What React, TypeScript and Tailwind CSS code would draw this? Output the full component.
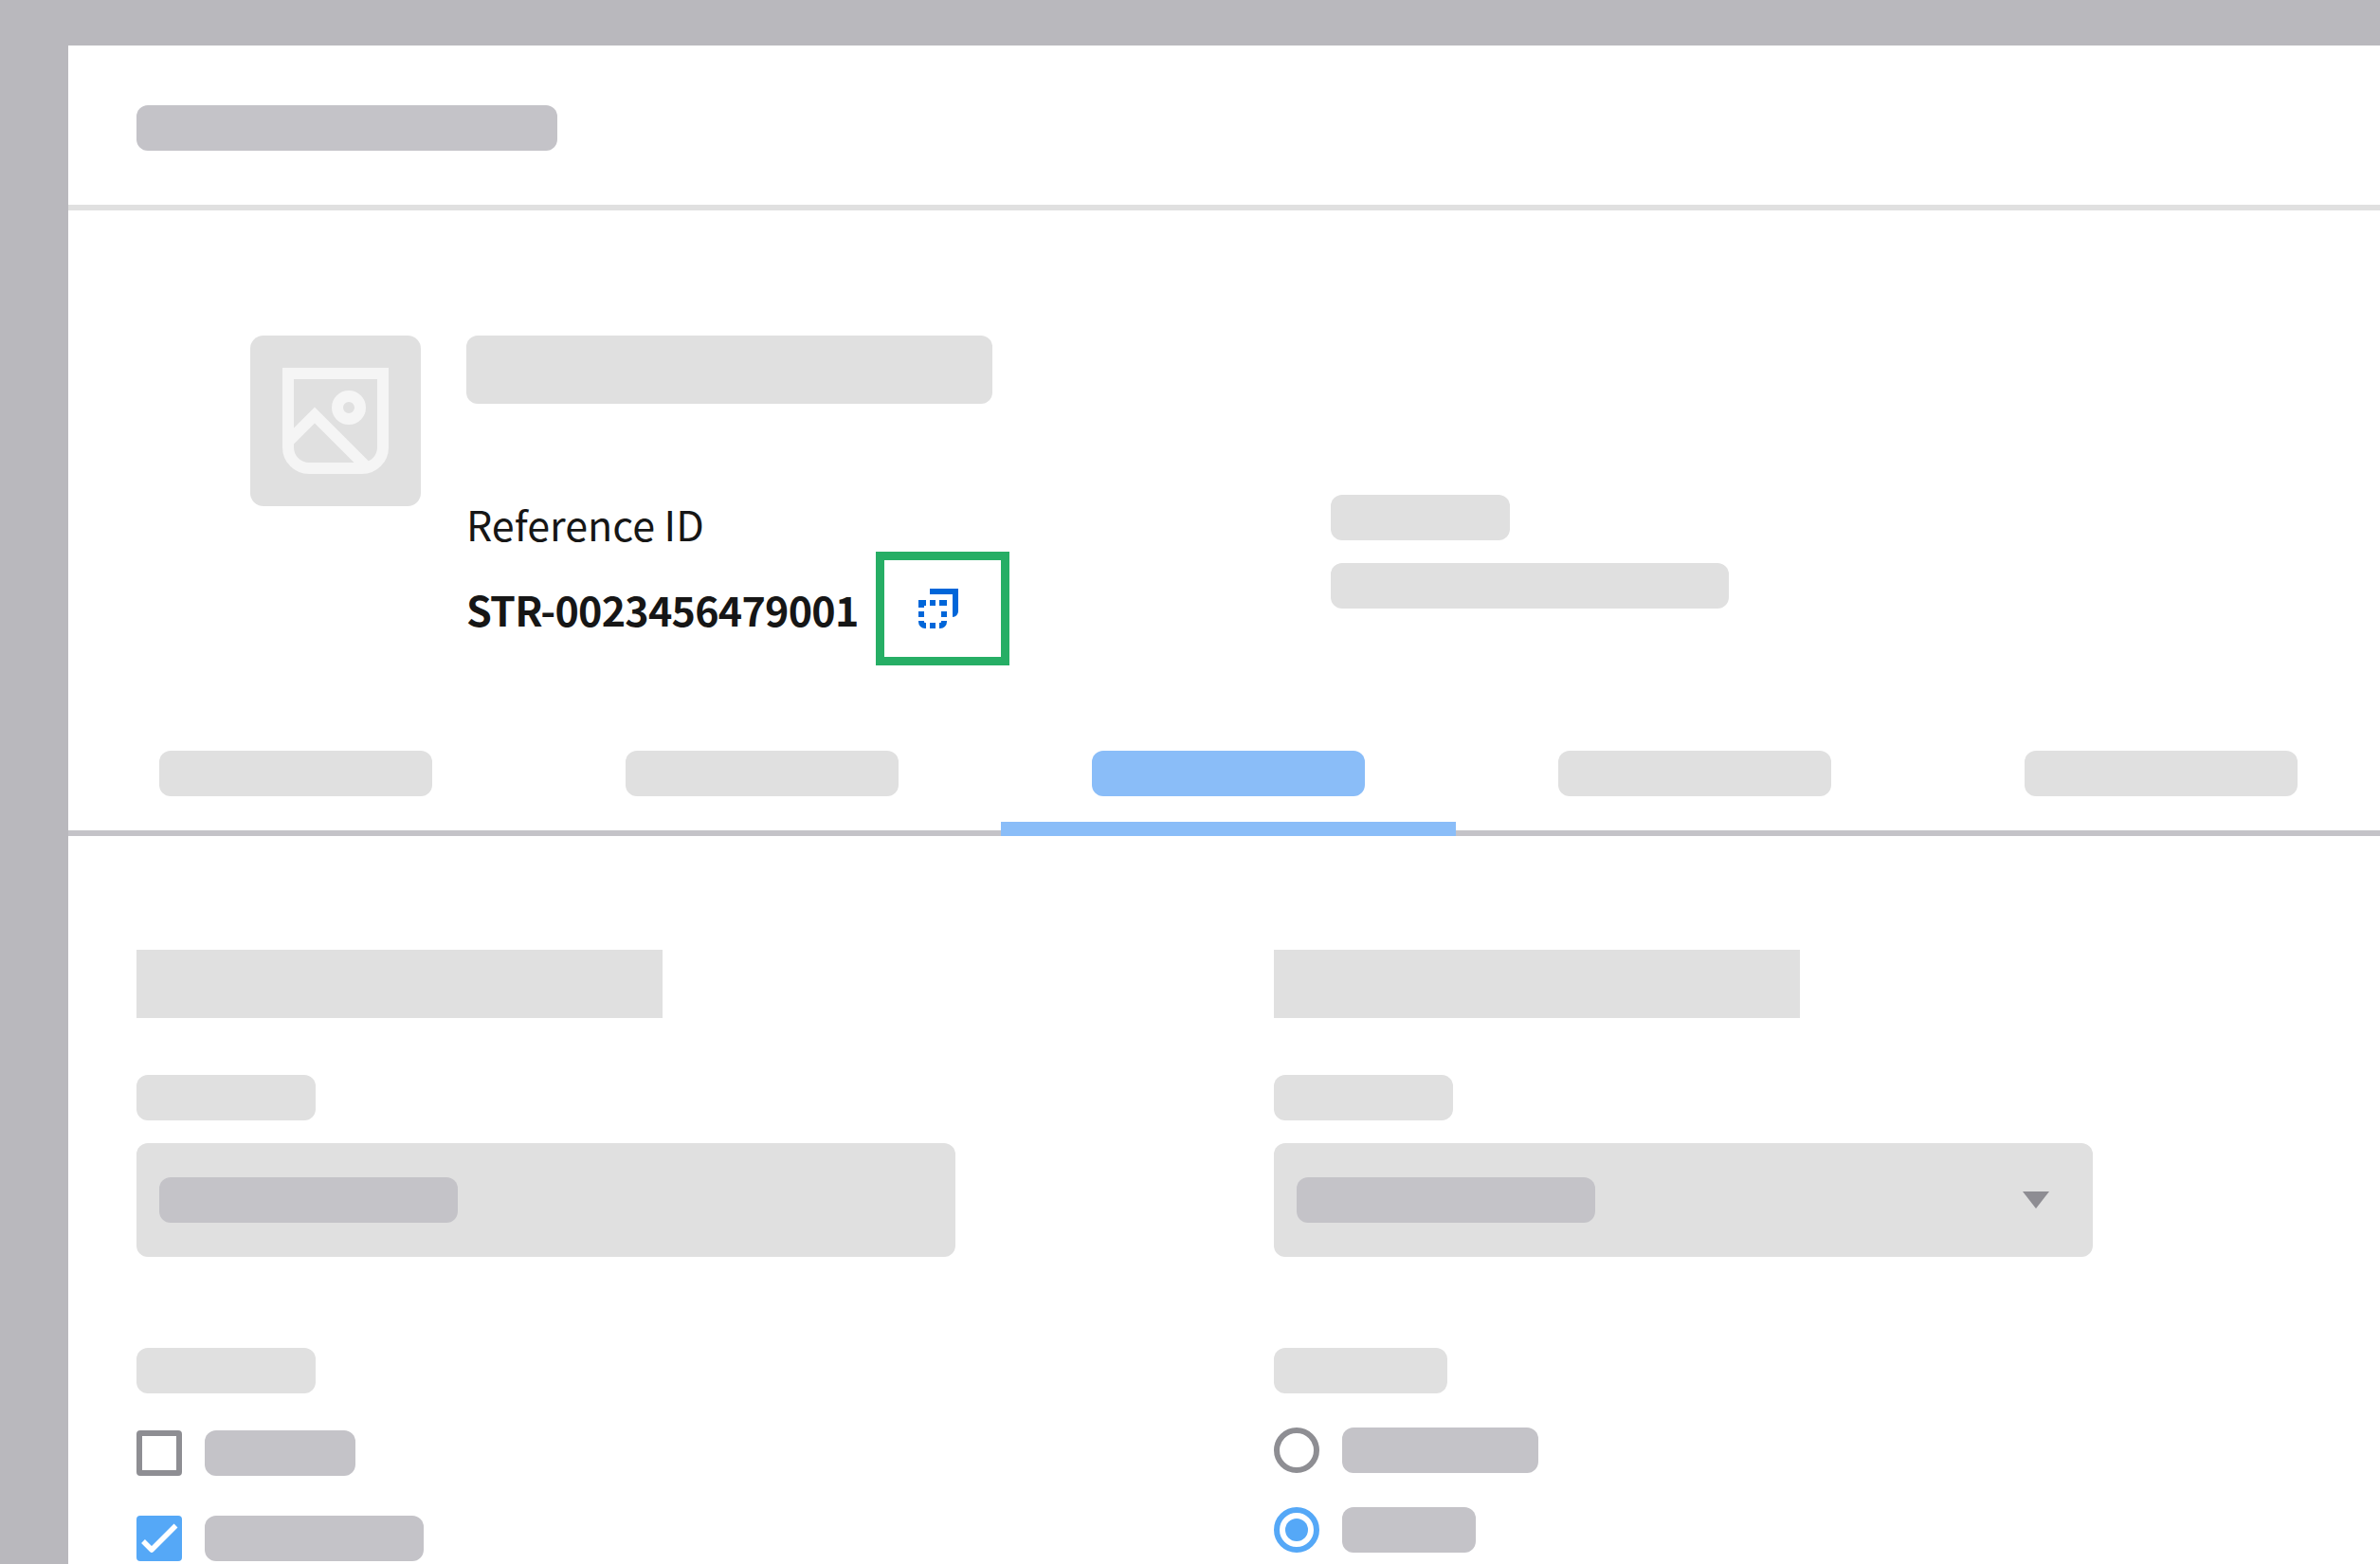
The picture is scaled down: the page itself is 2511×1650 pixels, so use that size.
const tabs = [false, false, true, false, false];

function ImageIcon() {
  return (
    <svg width="112" height="112" viewBox="0 0 112 112" fill="none" stroke="#f5f5f5" strokeWidth="12">
      <path d="M6 6H106V84a22 22 0 0 1-22 22H28a22 22 0 0 1-22-22Z" />
      <circle cx="70" cy="42" r="12" />
      <path d="M6 78L34 50L90 106" />
    </svg>
  );
}

function CopyIcon() {
  return (
    <svg width="42" height="42" viewBox="0 0 42 42" fill="#0066d9">
      <path d="M12 0H42V24a6 6 0 0 1-6 6V6H12Z" />
      <path d="M0 12H8V18H6V20H0Z" />
      <rect x="12" y="12" width="6" height="6" />
      <rect x="22" y="12" width="8" height="6" />
      <rect x="0" y="24" width="6" height="6" />
      <rect x="24" y="24" width="6" height="6" />
      <path d="M0 34h6v1a1 1 0 0 0 1 1h1v6H7a7 7 0 0 1-7-7Z" />
      <rect x="12" y="36" width="6" height="6" />
      <path d="M30 34h-6v1a1 1 0 0 1-1 1h-1v6h1a7 7 0 0 0 7-7Z" />
    </svg>
  );
}

function Section({ width }: { width: string }) {
  return <div className={`h-[48px] rounded-[12px] bg-[#e0e0e0] ${width}`} />;
}

export default function App() {
  return (
    <div className="h-[1650px] w-[2511px] overflow-hidden bg-[#b9b8bd] pl-[72px] pt-[48px] font-['Noto_Sans_CJK_SC',sans-serif] text-[#161616]">
      <div className="h-full bg-white">
        <div className="h-[174px] border-b-[6px] border-[#e0e0e0] pl-[72px] pt-[63px]">
          <div className="h-[48px] w-[444px] rounded-[12px] bg-[#c4c3c8]" />
        </div>

        <div className="flex h-[570px] pl-[192px] pt-[132px]">
          <div className="flex h-[180px] w-[180px] items-center justify-center rounded-[14px] bg-[#e0e0e0]">
            <ImageIcon />
          </div>
          <div className="ml-[48px] w-[912px]">
            <div className="h-[72px] w-[555px] rounded-[12px] bg-[#e0e0e0]" />
            <div className="mt-[98px] text-[43px] leading-[56px]">Reference ID</div>
            <div className="mt-[2px] flex items-center">
              <span className="w-[414px] text-[43px] font-semibold leading-[56px] tracking-[-0.75px]">STR-0023456479001</span>
              <div className="ml-[18px] flex h-[120px] w-[141px] items-center justify-center border-[9px] border-[#26ae65] pr-[9px]">
                <CopyIcon />
              </div>
            </div>
          </div>
          <div className="pt-[168px]">
            <div className="h-[48px] w-[189px] rounded-[12px] bg-[#e0e0e0]" />
            <div className="mt-[24px] h-[48px] w-[420px] rounded-[12px] bg-[#e0e0e0]" />
          </div>
        </div>

        <div className="flex h-[90px] items-start gap-[12px] border-b-[6px] border-[#c4c3c8]">
          {tabs.map((active, i) =>
            active ? (
              <div key={i} className="flex h-[90px] w-[480px] shrink-0 justify-center border-b-[15px] border-[#8abdf8]">
                <div className="h-[48px] w-[288px] rounded-[12px] bg-[#8abdf8]" />
              </div>
            ) : (
              <div key={i} className="flex w-[480px] shrink-0 justify-center">
                <div className="h-[48px] w-[288px] rounded-[12px] bg-[#e0e0e0]" />
              </div>
            )
          )}
        </div>

        <div className="grid grid-cols-[1200px_864px] pl-[72px] pt-[120px]">
          <div>
            <div className="h-[72px] w-[555px] bg-[#e0e0e0]" />
            <div className="mt-[60px]">
              <Section width="w-[189px]" />
            </div>
            <div className="mt-[24px] flex h-[120px] w-[864px] items-center rounded-[12px] bg-[#e0e0e0] px-[24px]">
              <div className="h-[48px] w-[315px] rounded-[12px] bg-[#c4c3c8]" />
            </div>
            <div className="mt-[96px]">
              <Section width="w-[189px]" />
            </div>
            <div className="mt-[39px] flex items-center gap-[24px]">
              <div className="h-[48px] w-[48px] rounded-[4px] border-[6px] border-[#8e8e93]" />
              <div className="h-[48px] w-[159px] rounded-[12px] bg-[#c4c3c8]" />
            </div>
            <div className="mt-[42px] flex items-center gap-[24px]">
              <div className="h-[48px] w-[48px] rounded-[4px] bg-[#55a8f7]">
                <svg width="48" height="48" viewBox="0 0 48 48" fill="none" stroke="#fff" strokeWidth="5.5" strokeLinejoin="round">
                  <path d="M7 27L16 36L41.5 10.5" />
                </svg>
              </div>
              <div className="h-[48px] w-[231px] rounded-[12px] bg-[#c4c3c8]" />
            </div>
          </div>

          <div>
            <div className="h-[72px] w-[555px] bg-[#e0e0e0]" />
            <div className="mt-[60px]">
              <Section width="w-[189px]" />
            </div>
            <div className="mt-[24px] flex h-[120px] w-[864px] items-center justify-between rounded-[12px] bg-[#e0e0e0] pl-[24px] pr-[46px]">
              <div className="h-[48px] w-[315px] rounded-[12px] bg-[#c4c3c8]" />
              <svg width="28" height="18" viewBox="0 0 28 18" fill="#8e8d93">
                <path d="M0 0H28L14 18Z" />
              </svg>
            </div>
            <div className="mt-[96px]">
              <Section width="w-[183px]" />
            </div>
            <div className="mt-[36px] flex items-center gap-[24px]">
              <div className="h-[48px] w-[48px] rounded-full border-[6px] border-[#8e8e93]" />
              <div className="h-[48px] w-[207px] rounded-[12px] bg-[#c4c3c8]" />
            </div>
            <div className="mt-[36px] flex items-center gap-[24px]">
              <div className="flex h-[48px] w-[48px] items-center justify-center rounded-full border-[6px] border-[#55a8f7]">
                <div className="h-[24px] w-[24px] rounded-full bg-[#55a8f7]" />
              </div>
              <div className="h-[48px] w-[141px] rounded-[12px] bg-[#c4c3c8]" />
            </div>
          </div>
        </div>
      </div>
    </div>
  );
}
